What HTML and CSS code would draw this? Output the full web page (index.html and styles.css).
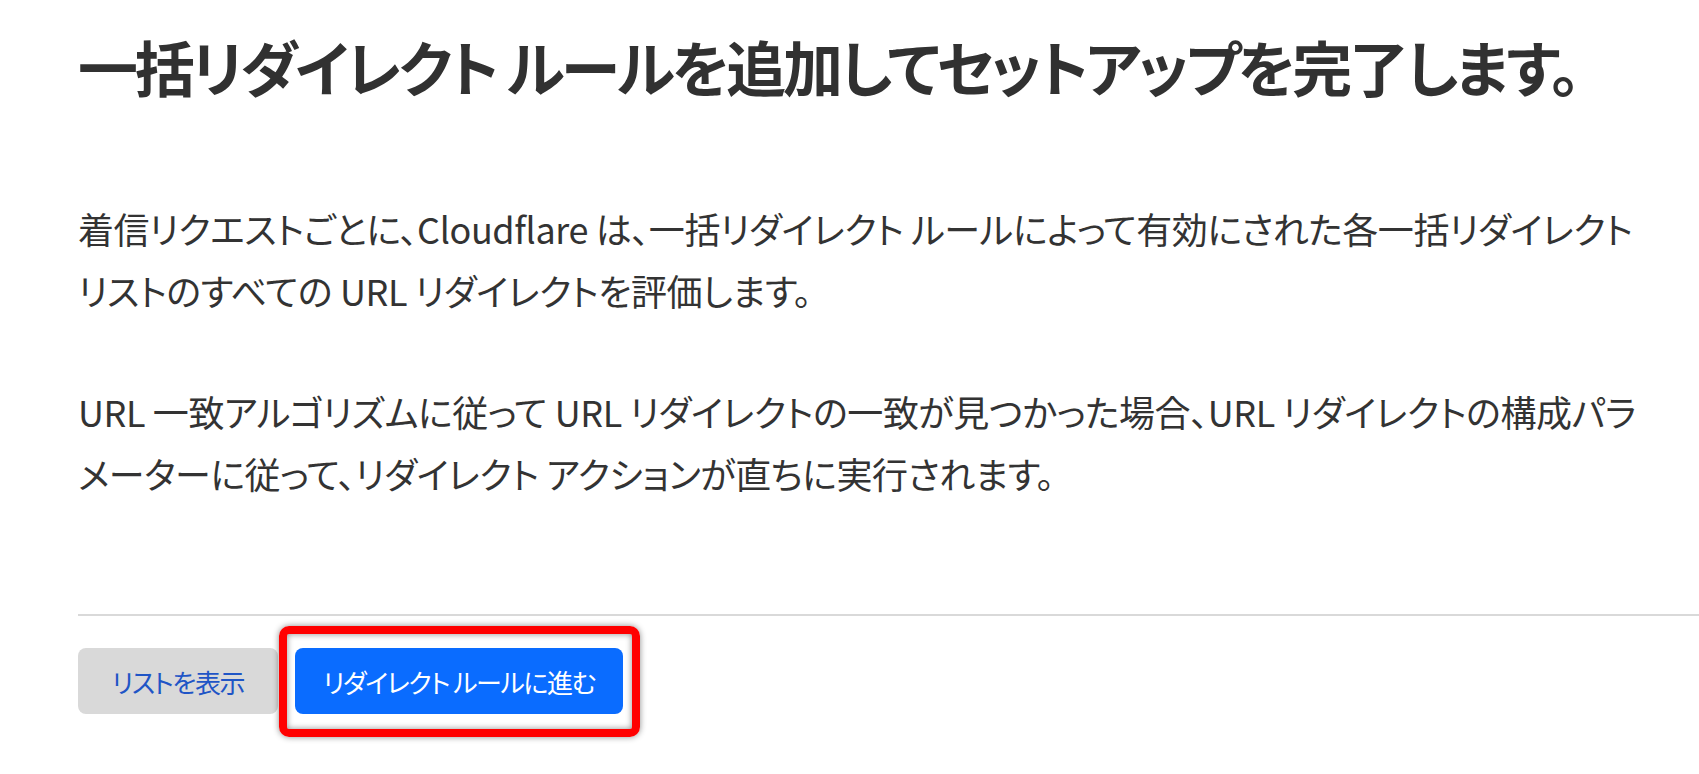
FILE: index.html
```html
<!DOCTYPE html>
<html lang="ja">
<head>
<meta charset="utf-8">
<title>一括リダイレクト</title>
<link rel="stylesheet" href="styles.css">
</head>
<body>
<main class="page">
  <h1 class="title">一括リダイレクト ルールを追加してセットアップを完了します。</h1>
  <section class="content">
    <p class="text">着信リクエストごとに、Cloudflare は、一括リダイレクト ルールによって有効にされた各一括リダイレクト リストのすべての URL リダイレクトを評価します。</p>
    <p class="text">URL 一致アルゴリズムに従って URL リダイレクトの一致が見つかった場合、URL リダイレクトの構成パラメーターに従って、リダイレクト アクションが直ちに実行されます。</p>
  </section>
  <footer class="actions">
    <button class="btn btn-secondary" type="button">リストを表示</button>
    <span class="highlight-wrap">
      <button class="btn btn-primary" type="button">リダイレクト ルールに進む</button>
      <span class="highlight"></span>
    </span>
  </footer>
</main>
</body>
</html>
```

FILE: styles.css
```css
html, body {
  margin: 0;
  padding: 0;
  background: #ffffff;
}

body {
  font-family: "Noto Sans CJK JP", "Noto Sans", sans-serif;
  color: #333333;
  font-feature-settings: "palt";
}

.page {
  padding: 0 0 60px 78px;
}

.title {
  margin: 20px 0 0 0;
  font-size: 60px;
  line-height: 92px;
  font-weight: 700;
  color: #313131;
  letter-spacing: -3.2px;
  white-space: nowrap;
}

.content {
  width: 1568px;
  padding-top: 85px;
}

.text {
  margin: 0 0 59px 0;
  font-size: 36px;
  line-height: 62px;
  font-weight: 400;
  color: #333333;
  letter-spacing: -0.4px;
}

.text:last-child {
  margin-bottom: 0;
}

.actions {
  border-top: 2px solid #d9d9d9;
  margin-top: 110px;
  padding-top: 32px;
  display: flex;
  align-items: center;
  gap: 17px;
}

.btn {
  height: 66px;
  padding: 0;
  border: none;
  border-radius: 8px;
  font-family: "Noto Sans CJK JP", "Noto Sans", sans-serif;
  font-feature-settings: "palt";
  font-size: 26px;
  letter-spacing: -1.4px;
  cursor: pointer;
  display: inline-flex;
  align-items: center;
  justify-content: center;
}

.btn-secondary {
  width: 200px;
  background: #d9d9d9;
  color: #1f55c6;
}

.btn-primary {
  width: 328px;
  background: #0a6cff;
  color: #ffffff;
}

.highlight-wrap {
  position: relative;
  display: inline-flex;
}

.highlight {
  position: absolute;
  top: -22px;
  left: -16px;
  right: -17px;
  bottom: -23px;
  border: 8px solid #ff0000;
  border-radius: 10px;
  box-shadow: 0 0 6px rgba(0, 0, 0, 0.45), inset 0 0 6px rgba(0, 0, 0, 0.45);
  pointer-events: none;
}
```
